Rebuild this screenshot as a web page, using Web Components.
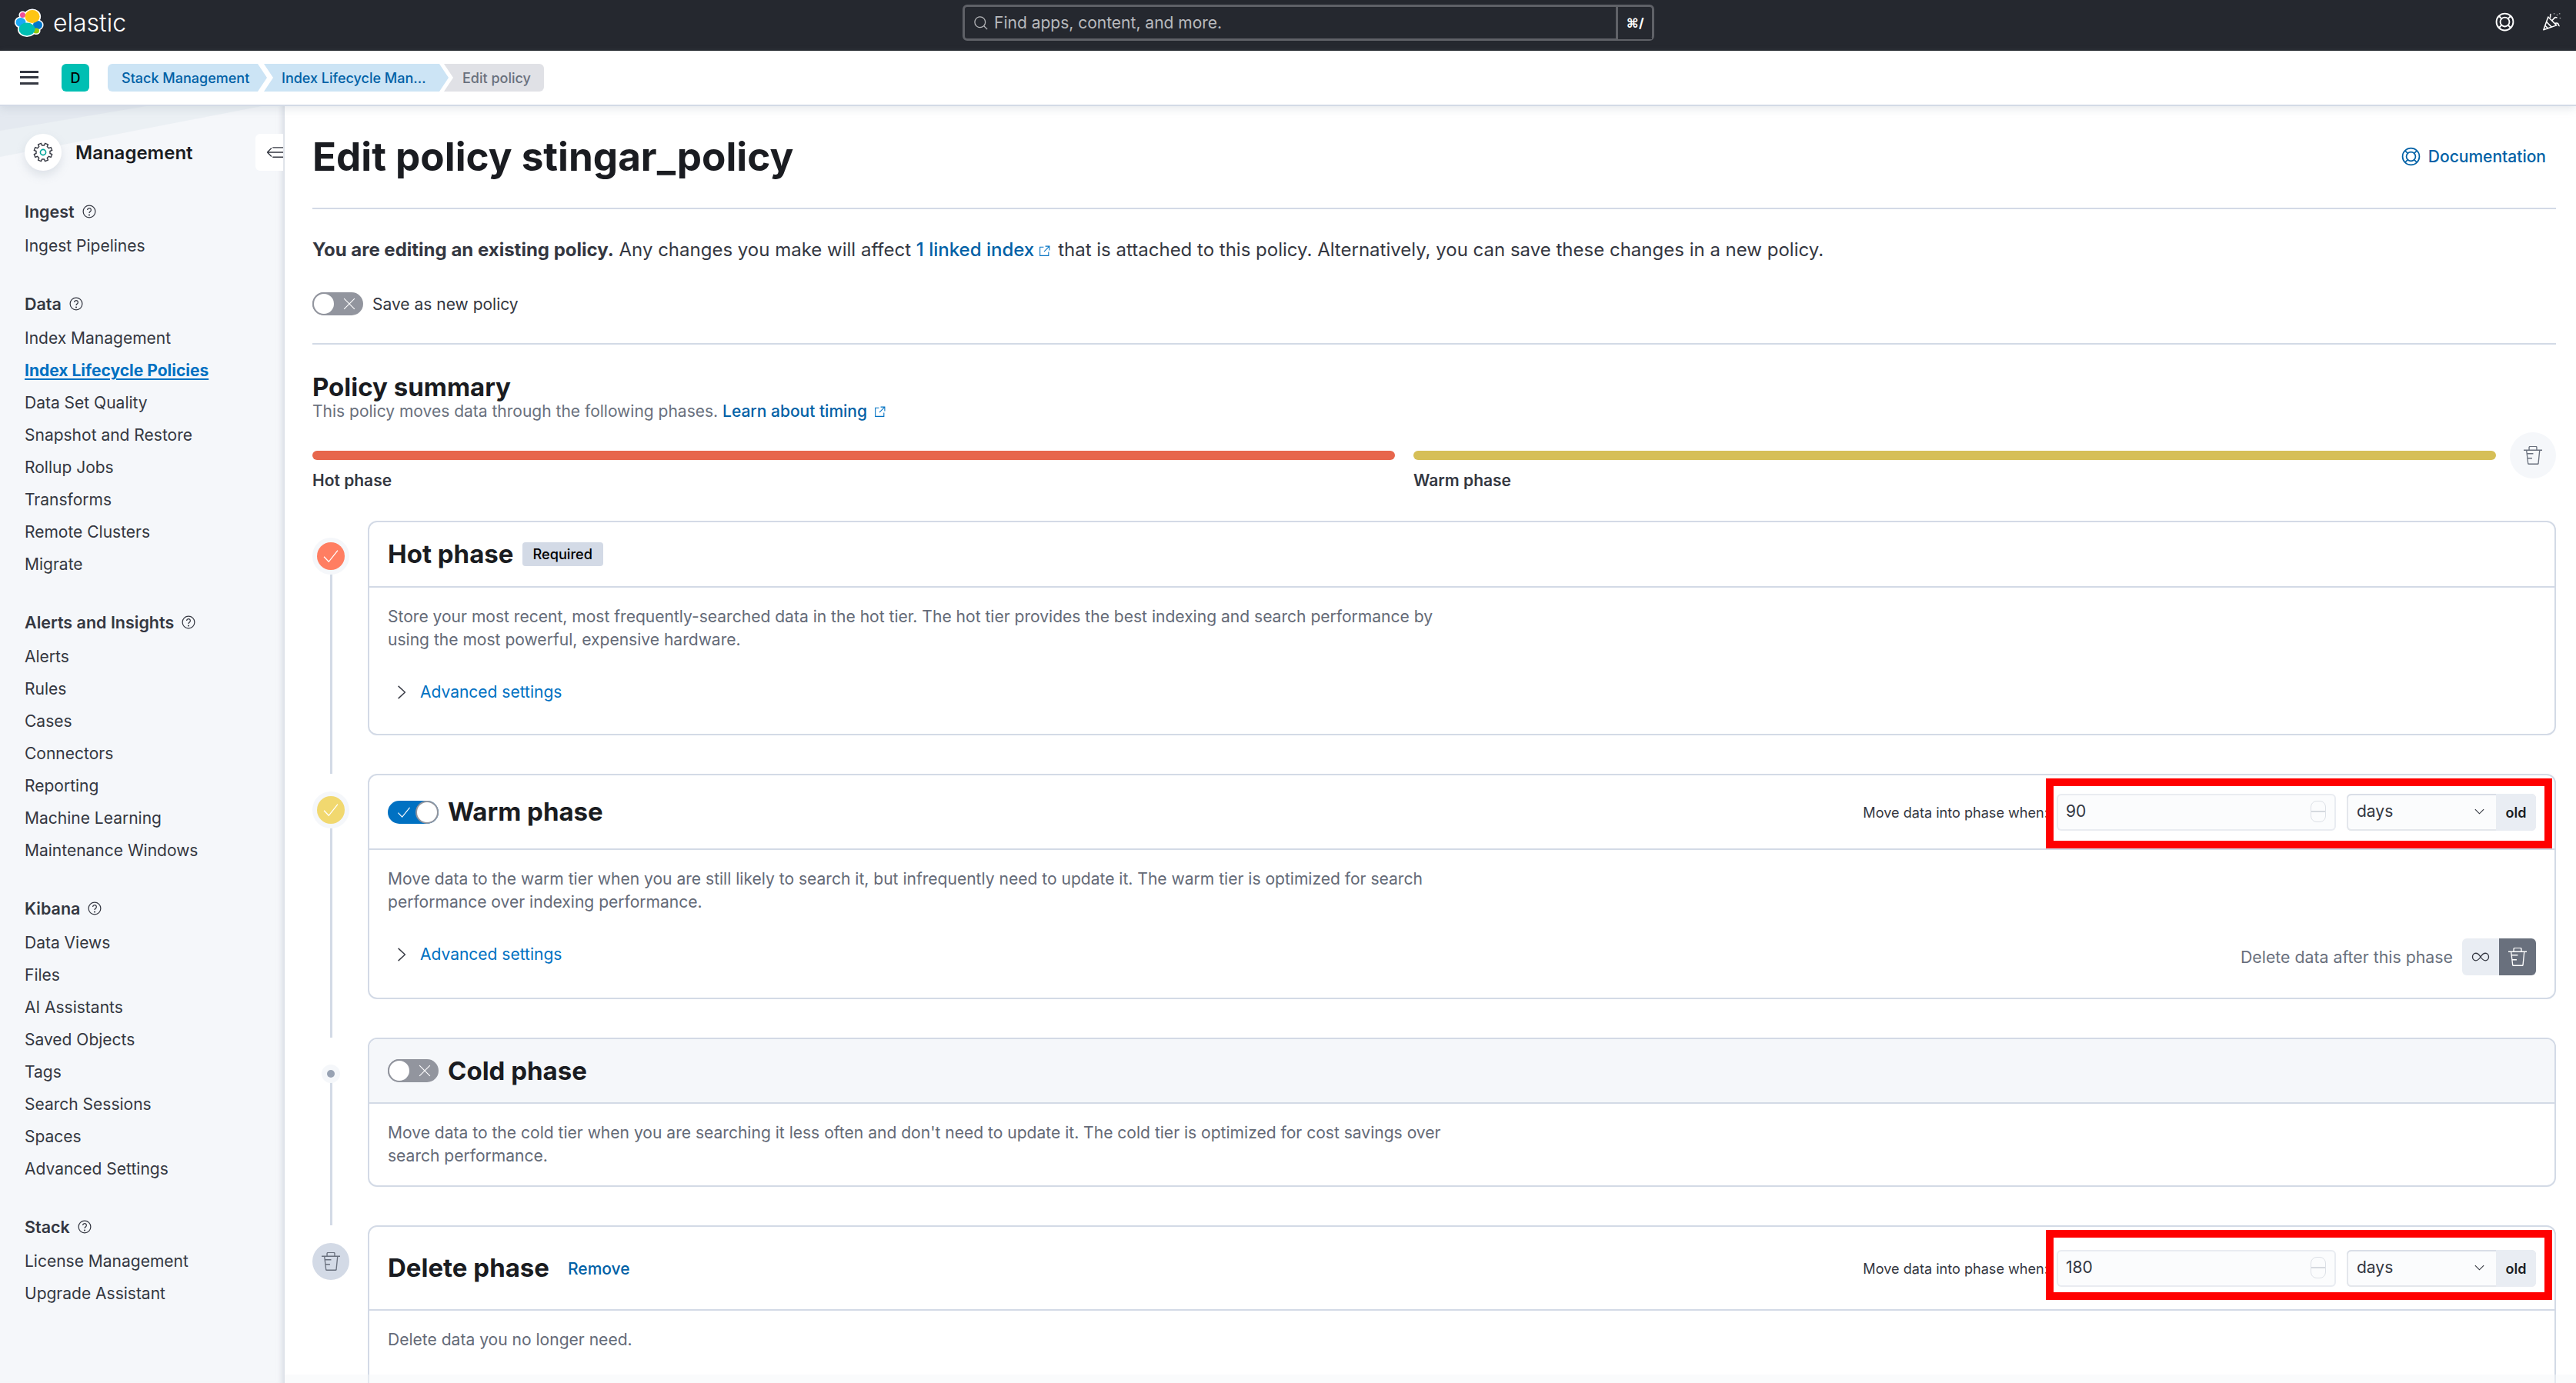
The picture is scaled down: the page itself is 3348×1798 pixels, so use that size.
<!DOCTYPE html>
<html lang="en">
<head>
<meta charset="utf-8">
<title>Edit policy stingar_policy</title>
<style>
  html, body { margin: 0; height: 100%; overflow: hidden; background: #fff; }
  body { font-family: Inter, "Liberation Sans", sans-serif; color: #343741; }
  .shell { display: flex; height: calc(100vh - 138px); }
  .badge { display: inline-block; padding: 0 14px 0 13px; height: 31px; line-height: 31px; border-radius: 4px; background: #d3dae6; font-size: 18.200px; font-weight: 500; color: #000; vertical-align: middle; }
  .remove { margin-left: 12px; font-size: 21px; font-weight: 500; color: #0061a6; vertical-align: middle; }
</style>
</head>
<body>
<app-header></app-header>
<app-breadcrumbs></app-breadcrumbs>
<div class="shell">
  <side-nav>
    <nav-group label="Ingest"><nav-item>Ingest Pipelines</nav-item></nav-group>
    <nav-group label="Data">
      <nav-item>Index Management</nav-item>
      <nav-item active>Index Lifecycle Policies</nav-item>
      <nav-item>Data Set Quality</nav-item>
      <nav-item>Snapshot and Restore</nav-item>
      <nav-item>Rollup Jobs</nav-item>
      <nav-item>Transforms</nav-item>
      <nav-item>Remote Clusters</nav-item>
      <nav-item>Migrate</nav-item>
    </nav-group>
    <nav-group label="Alerts and Insights">
      <nav-item>Alerts</nav-item>
      <nav-item>Rules</nav-item>
      <nav-item>Cases</nav-item>
      <nav-item>Connectors</nav-item>
      <nav-item>Reporting</nav-item>
      <nav-item>Machine Learning</nav-item>
      <nav-item>Maintenance Windows</nav-item>
    </nav-group>
    <nav-group label="Kibana">
      <nav-item>Data Views</nav-item>
      <nav-item>Files</nav-item>
      <nav-item>AI Assistants</nav-item>
      <nav-item>Saved Objects</nav-item>
      <nav-item>Tags</nav-item>
      <nav-item>Search Sessions</nav-item>
      <nav-item>Spaces</nav-item>
      <nav-item>Advanced Settings</nav-item>
    </nav-group>
    <nav-group label="Stack">
      <nav-item>License Management</nav-item>
      <nav-item>Upgrade Assistant</nav-item>
    </nav-group>
  </side-nav>
  <policy-page>
    <phase-row marker="hot" head="85">
      <span slot="title">Hot phase</span>
      <span slot="after-title" class="badge">Required</span>
      Store your most recent, most frequently-searched data in the hot tier. The hot tier provides the best indexing and search performance by using the most powerful, expensive hardware.
      <advanced-row slot="footer"></advanced-row>
    </phase-row>
    <phase-row marker="warm" head="97" marked>
      <eui-switch slot="before-title" checked></eui-switch>
      <span slot="title">Warm phase</span>
      <move-when slot="controls" value="90"></move-when>
      Move data to the warm tier when you are still likely to search it, but infrequently need to update it. The warm tier is optimized for search performance over indexing performance.
      <advanced-row slot="footer" deletable></advanced-row>
    </phase-row>
    <phase-row marker="cold" head="84" shaded>
      <eui-switch slot="before-title"></eui-switch>
      <span slot="title">Cold phase</span>
      Move data to the cold tier when you are searching it less often and don't need to update it. The cold tier is optimized for cost savings over search performance.
    </phase-row>
    <phase-row marker="delete" head="109" marked last>
      <span slot="title">Delete phase</span>
      <span slot="after-title" class="remove">Remove</span>
      <move-when slot="controls" value="180"></move-when>
      Delete data you no longer need.
    </phase-row>
  </policy-page>
</div>

<script>
const ICONS = {
  search: '<circle cx="7" cy="7" r="5.5"/><path d="M11 11l3.5 3.5"/>',
  help: '<circle cx="8" cy="8" r="7"/><path d="M5.900 6.200a2.100 2.100 0 1 1 3.300 1.700c-.8.5-1.200 1-1.200 1.900"/><circle cx="8" cy="12" r=".4"/>',
  lifebuoy: '<circle cx="8" cy="8" r="7"/><circle cx="8" cy="8" r="3.800"/><path d="M3.050 3.050l2.260 2.260M12.950 3.050l-2.260 2.260M3.050 12.950l2.260-2.260M12.950 12.950l-2.260-2.260"/>',
  party: '<path d="M1.200 14.600L5 3.800l7 7-10.800 3.800z" stroke-linejoin="round"/><path d="M3.600 8l4.400 4.400M2.500 11l2.500 2.500"/><path d="M6.500 4.500C7.500 3.500 6 2.500 7.300 1.400M8 7l2.500-2.600c.7-.7 1.200.4 2-.2M10.500 9.500c1-.8 2.500-.6 3 .4.4.8 0 1.400 1 1.500"/><path d="M10 1v.5M12.500 2v.5M14.500 1v.5M15 4.500v.5"/>',
  external: '<path d="M7 3H2.500v10.500H13V9"/><path d="M9 2h5v5M14 2L7.500 8.500"/>',
  check: '<path d="M2.500 8.500l3.800 4L13.500 3.500"/>',
  cross: '<path d="M3 3l10 10M13 3L3 13"/>',
  chevronRight: '<path d="M4.500 1.500l7 6.500-7 6.500"/>',
  chevronDown: '<path d="M2 5.500l6 6 6-6"/>',
  trash: '<path d="M0 3.500h16M4.700 3.500V1.200a1 1 0 0 1 1-1h4.600a1 1 0 0 1 1 1v2.300M2.500 4L3.800 15q.1.500.6.500h7.700q.5 0 .6-.5L13.800 4M2.800 6.500h5.500M3.300 10.500h4"/>',
  infinity: '<path d="M8 8C6.400 5.400 4.900 4.800 3.800 4.800 2.200 4.800 1 6.200 1 8s1.200 3.200 2.800 3.200c1.100 0 2.600-.6 4.200-3.200 1.600-2.600 3.100-3.200 4.200-3.200C13.800 4.800 15 6.200 15 8s-1.200 3.200-2.800 3.200c-1.100 0-2.600-.6-4.200-3.200z"/>',
  collapse: '<path d="M1 8h15M1 8l4-4M1 8l4 4M6 3.500h10M6 12.500h10"/>'
};

class UiIcon extends HTMLElement {
  connectedCallback() {
    const size = this.getAttribute('size') || 24;
    const width = this.getAttribute('stroke') || 1;
    this.attachShadow({ mode: 'open' }).innerHTML = `
      <style>:host { display: inline-flex; flex: none; } svg { display: block; }</style>
      <svg width="${size}" height="${size}" viewBox="0 0 16 16" fill="none" stroke="currentColor" stroke-width="${width}">${ICONS[this.getAttribute('name')]}</svg>`;
  }
}

class AppHeader extends HTMLElement {
  constructor() {
    super();
    const blobs = `
      <ellipse cx="10.500" cy="8.500" rx="3.500" ry="3.500" fill="#f04e98"/>
      <ellipse cx="8" cy="18" rx="6.500" ry="6" fill="#1ba9f5"/>
      <ellipse cx="30" cy="21.500" rx="6" ry="5.500" fill="#0077cc"/>
      <ellipse cx="28" cy="29" rx="4" ry="3.500" fill="#93c90e"/>
      <ellipse cx="23" cy="10.500" rx="9.500" ry="8.500" fill="#fec514"/>
      <ellipse cx="16" cy="27" rx="10.500" ry="8.500" fill="#00bfb3"/>`;
    this.attachShadow({ mode: 'open' }).innerHTML = `
      <style>
        :host { display: flex; align-items: flex-start; height: 66px; background: #25282f; color: #fff; position: relative; }
        .logo { display: flex; align-items: center; gap: 12px; margin: 11px 0 0 19px; width: 1232px; height: 38px; }
        .word { font-size: 32px; font-weight: 300; line-height: 38px; color: #fff; font-family: Inter, sans-serif; }
        .search { display: flex; width: 899px; height: 47px; margin-top: 6px; box-sizing: border-box; border: 3px solid #5f6167; border-radius: 6px; }
        .field { flex: 1; display: flex; align-items: center; gap: 7px; padding-left: 11px; font-size: 21px; color: #b9babd; }
        .key { width: 44px; margin: -1px 0; border: 1px solid #5f6167; border-width: 0 0 0 3px; display: flex; align-items: center; justify-content: center; font-size: 17px; font-weight: 700; box-shadow: 0 -2px 0 #25282f inset; }
        .right { margin-left: auto; display: flex; align-items: center; gap: 36px; margin: 16px 19px 0 auto; }
      </style>
      <div class="logo">
        <svg width="38" height="38" viewBox="0 0 38 38">
          <g stroke="#fff" stroke-width="3.200">${blobs}</g>
          ${blobs}
        </svg>
        <span class="word">elastic</span>
      </div>
      <div class="search">
        <div class="field"><ui-icon name="search" size="20"></ui-icon>Find apps, content, and more.</div>
        <div class="key">⌘/</div>
      </div>
      <div class="right">
        <ui-icon name="lifebuoy" size="25" stroke="1.200"></ui-icon>
        <ui-icon name="party" size="25" stroke="1"></ui-icon>
      </div>`;
  }
}

class AppBreadcrumbs extends HTMLElement {
  constructor() {
    super();
    this.attachShadow({ mode: 'open' }).innerHTML = `
      <style>
        :host { display: flex; align-items: center; height: 72px; box-sizing: border-box; border-bottom: 2px solid #d3dae6; background: #fff; position: relative; z-index: 2; box-shadow: 0 4px 10px rgba(152,162,179,.22); }
        .menu { width: 24px; height: 18px; margin-left: 26px; border-top: 3.500px solid #343741; border-bottom: 3.500px solid #343741; box-sizing: border-box; position: relative; }
        .menu::after { content: ""; position: absolute; left: 0; right: 0; top: 3.750px; height: 3.500px; background: #343741; }
        .space { width: 36px; height: 36px; margin-left: 30px; border-radius: 6px; background: #00bfb3; color: #000; font-size: 18px; font-weight: 500; display: flex; align-items: center; justify-content: center; }
        .crumbs { display: flex; margin-left: 24px; font-size: 18px; font-weight: 500; }
        .crumb { height: 36px; display: flex; align-items: center; white-space: nowrap; }
        .a { width: 207px; padding-left: 18px; box-sizing: border-box; background: #cce4f5; color: #0061a6; border-radius: 6px 0 0 6px; clip-path: polygon(0 0, 195px 0, 100% 50%, 195px 100%, 0 100%); }
        .b { width: 240px; margin-left: -4px; padding-left: 23px; box-sizing: border-box; background: #cce4f5; color: #0061a6; clip-path: polygon(0 0, 228px 0, 100% 50%, 228px 100%, 0 100%, 12px 50%); }
        .c { width: 130px; margin-left: -6px; padding-left: 24px; box-sizing: border-box; background: #e0e1e6; color: #69707d; border-radius: 0 6px 6px 0; clip-path: polygon(0 0, 100% 0, 100% 100%, 0 100%, 12px 50%); }
      </style>
      <div class="menu"></div>
      <div class="space">D</div>
      <div class="crumbs">
        <div class="crumb a">Stack Management</div>
        <div class="crumb b">Index Lifecycle Man…</div>
        <div class="crumb c">Edit policy</div>
      </div>`;
  }
}

class SideNav extends HTMLElement {
  constructor() {
    super();
    // gear outline: eight square teeth, worked out rather than typed as a long path
    const pts = [];
    const at = (r, deg) => {
      const a = deg * Math.PI / 180;
      return (8 + r * Math.cos(a)).toFixed(2) + ',' + (8 + r * Math.sin(a)).toFixed(2);
    };
    for (let k = 0; k < 8; k++) {
      const a = k * 45 + 22.5;
      pts.push(at(5.6, a - 13), at(7.4, a - 10), at(7.4, a + 10), at(5.6, a + 13));
    }
    this.attachShadow({ mode: 'open' }).innerHTML = `
      <style>
        :host { display: block; flex: none; width: 370px; box-sizing: border-box; padding: 36px 0 0 32px; background: #f5f7fa; position: relative; overflow: hidden; box-shadow: inset -10px 0 8px -8px rgba(152,162,179,.4); }
        .shape { position: absolute; left: 0; top: 0; width: 340px; height: 66px; background: #e9edf3; clip-path: polygon(0 0, 100% 0, 0 100%); opacity: .8; }
        .shape.two { width: 190px; height: 32px; background: #dfe4ec; opacity: .6; }
        .head { display: flex; align-items: center; height: 48px; position: relative; margin-bottom: 38px; }
        .gear { width: 48px; height: 48px; border-radius: 50%; background: #fff; display: flex; align-items: center; justify-content: center; box-shadow: 0 6px 12px rgba(152,162,179,.25); }
        .name { margin-left: 18px; font-size: 24px; font-weight: 600; color: #1a1c21; }
        .collapse { position: absolute; left: 300px; top: 0; width: 36px; height: 48px; background: #fff; border-radius: 6px 0 0 6px; display: flex; align-items: center; justify-content: flex-end; color: #343741; overflow: hidden; }
      </style>
      <div class="shape"></div><div class="shape two"></div>
      <div class="head">
        <div class="gear">
          <svg width="26" height="26" viewBox="0 0 16 16" fill="none">
            <polygon points="${pts.join(' ')}" stroke="#343741" stroke-width=".85" stroke-linejoin="round"/>
            <circle cx="8" cy="8" r="2.200" stroke="#00a69b" stroke-width="1"/>
          </svg>
        </div>
        <div class="name">Management</div>
        <div class="collapse"><ui-icon name="collapse" size="22"></ui-icon></div>
      </div>
      <slot></slot>`;
  }
}

class NavGroup extends HTMLElement {
  constructor() {
    super();
    this.attachShadow({ mode: 'open' }).innerHTML = `
      <style>
        :host { display: block; margin-bottom: 39px; }
        .label { display: flex; align-items: center; gap: 10px; height: 30px; margin-bottom: 9px; font-size: 21.500px; font-weight: 600; color: #343741; }
      </style>
      <div class="label"><span id="t"></span><ui-icon name="help" size="18" stroke="1.100"></ui-icon></div>
      <slot></slot>`;
    this.shadowRoot.getElementById('t').textContent = this.getAttribute('label');
  }
}

class NavItem extends HTMLElement {
  constructor() {
    super();
    this.attachShadow({ mode: 'open' }).innerHTML = `
      <style>
        :host { display: block; height: 42px; line-height: 42px; font-size: 21px; color: #343741; white-space: nowrap; }
        :host([active]) { color: #0071c2; font-weight: 700; }
        :host([active]) span { text-decoration: underline; text-decoration-thickness: 2px; text-underline-offset: 3px; }
      </style>
      <span><slot></slot></span>`;
  }
}

class EuiSwitch extends HTMLElement {
  constructor() {
    super();
    this.attachShadow({ mode: 'open' }).innerHTML = `
      <style>
        :host { display: flex; position: relative; flex: none; width: 66px; height: 30px; border-radius: 15px; background: #92959e; color: #fff; align-items: center; }
        :host([checked]) { background: #0071c2; }
        .thumb { position: absolute; left: 0; top: 0; width: 30px; height: 30px; box-sizing: border-box; border-radius: 50%; background: #fff; border: 2px solid #92959e; }
        :host([checked]) .thumb { left: auto; right: 0; }
        ui-icon { position: absolute; left: 37px; top: 4px; }
        :host([checked]) ui-icon { left: 10px; }
      </style>
      <ui-icon name="${this.hasAttribute('checked') ? 'check' : 'cross'}" size="22" stroke=".8"></ui-icon>
      <div class="thumb"></div>`;
  }
}

class MoveWhen extends HTMLElement {
  constructor() {
    super();
    this.attachShadow({ mode: 'open' }).innerHTML = `
      <style>
        :host { display: flex; align-items: center; }
        .label { font-size: 18.100px; color: #343741; margin-right: 11px; white-space: nowrap; }
        .input { width: 363px; height: 48px; box-sizing: border-box; display: flex; align-items: center; padding: 0 13px 2px 12px; border-radius: 6px; background: #fbfcfd; box-shadow: inset 0 0 0 2px #e9ecf1; font-size: 21px; color: #343741; }
        .spin { margin-left: auto; width: 20px; height: 28px; box-sizing: border-box; border: 1px solid #dde1e7; border-radius: 8px; position: relative; background: #fbfcfd; }
        .spin::after { content: ""; position: absolute; left: 0; right: 0; top: 12px; height: 2px; background: #d5d9df; }
        .select { margin-left: 14px; width: 246px; height: 48px; box-sizing: border-box; display: flex; border-radius: 6px; overflow: hidden; background: #fbfcfd; box-shadow: inset 0 2px 0 #d9dee7, inset 0 -2px 0 #e4e7ec, inset 2px 0 0 #e4e7ec; font-size: 21px; color: #343741; }
        .unit { flex: 1; display: flex; align-items: center; justify-content: space-between; padding: 0 14px 2px 13px; }
        .old { width: 52px; display: flex; align-items: center; justify-content: center; background: #e9edf3; font-size: 18px; font-weight: 600; color: #1a1c21; padding-top: 1px; box-sizing: border-box; }
      </style>
      <div class="label">Move data into phase when:</div>
      <div class="input"><span>${this.getAttribute('value')}</span><div class="spin"></div></div>
      <div class="select">
        <div class="unit"><span>days</span><ui-icon name="chevronDown" size="15" stroke="1.200"></ui-icon></div>
        <div class="old">old</div>
      </div>`;
  }
}

class AdvancedRow extends HTMLElement {
  constructor() {
    super();
    this.attachShadow({ mode: 'open' }).innerHTML = `
      <style>
        :host { display: flex; justify-content: space-between; margin: 29px 0 7px; font-size: 21px; }
        .adv { display: flex; align-items: center; height: 48px; color: #0071c2; }
        .adv ui-icon { margin: 0 14px 0 8px; color: #343741; }
        .del { display: flex; align-items: center; height: 48px; margin: 3px 0 -1px; color: #69707d; font-size: 21.300px; }
        .grp { display: flex; margin-left: 12px; border-radius: 6px; overflow: hidden; }
        .grp div { width: 48px; height: 48px; display: flex; align-items: center; justify-content: center; }
        .inf { background: #e9edf3; color: #343741; }
        .bin { background: #69707d; color: #fff; }
      </style>
      <div class="adv"><ui-icon name="chevronRight" size="20" stroke="1.100"></ui-icon>Advanced settings</div>
      ${this.hasAttribute('deletable') ? `
      <div class="del">Delete data after this phase
        <div class="grp">
          <div class="inf"><ui-icon name="infinity" size="24" stroke=".9"></ui-icon></div>
          <div class="bin"><ui-icon name="trash" size="24" stroke=".9"></ui-icon></div>
        </div>
      </div>` : ''}`;
  }
}

class PhaseRow extends HTMLElement {
  constructor() {
    super();
    const marker = this.getAttribute('marker');
    const head = this.getAttribute('head');
    const dot = { hot: 'check', warm: 'check' }[marker];
    this.attachShadow({ mode: 'open' }).innerHTML = `
      <style>
        :host { display: flex; position: relative; margin-bottom: 50px; }
        :host([last]) { margin-bottom: 0; }
        .rail { flex: none; width: 72px; position: relative; }
        .rail::before { content: ""; position: absolute; left: 23px; width: 3px; top: 46px; bottom: -50px; background: #d3dae6; }
        :host([last]) .rail::before { display: none; }
        .halo { position: absolute; left: 0; top: 23px; width: 48px; height: 48px; border-radius: 50%; background: #f5f7fa; display: flex; align-items: center; justify-content: center; color: #fff; }
        .halo.hot { top: 22px; }
        .disc { width: 36px; height: 36px; border-radius: 50%; display: flex; align-items: center; justify-content: center; }
        .hot .disc { background: #ff7e62; }
        .warm .disc { background: #f1d86f; }
        .halo.cold { left: 12px; top: 35px; width: 24px; height: 24px; }
        .cold .disc { width: 10px; height: 10px; background: #98a2b3; }
        .delete { background: #d3dae6; color: #69707d; }
        .card { flex: 1; min-width: 0; box-sizing: border-box; border: 2px solid #d3dae6; border-radius: 12px; background: #fff; }
        :host([last]) .card { min-height: 300px; }
        .head { height: ${head}px; box-sizing: border-box; border-bottom: 2px solid #d3dae6; padding: 0 24px; display: flex; align-items: center; position: relative; border-radius: 10px 10px 0 0; }
        :host([shaded]) .head { background: #f5f7fa; }
        .title { font-size: 33px; font-weight: 700; color: #1a1c21; line-height: 40px; margin-top: -1px; }
        ::slotted([slot="before-title"]) { margin-right: 12px; }
        .after { margin-left: 12px; }
        ::slotted(.remove) { margin-left: 12px; }
        .ctl { margin-left: auto; }
        .mark { position: absolute; top: 4px; right: 3px; width: 658px; height: 91px; box-sizing: border-box; border: 10px solid #f00; }
        .body { padding: 23px 24px; font-size: 21.060px; line-height: 30px; color: #646a77; }
        .text { max-width: 1400px; }
      </style>
      <div class="rail">
        <div class="halo ${marker}">${
          marker === 'delete' ? '<ui-icon name="trash" size="24" stroke=".9"></ui-icon>'
          : `<div class="disc">${dot ? '<ui-icon name="check" size="26" stroke=".8"></ui-icon>' : ''}</div>`
        }</div>
      </div>
      <div class="card">
        <div class="head">
          <slot name="before-title"></slot>
          <div class="title"><slot name="title"></slot></div>
          <div class="after"><slot name="after-title"></slot></div>
          <div class="ctl"><slot name="controls"></slot></div>
          ${this.hasAttribute('marked') ? '<div class="mark"></div>' : ''}
        </div>
        <div class="body">
          <div class="text"><slot></slot></div>
          <slot name="footer"></slot>
        </div>
      </div>`;
  }
}

class PolicyPage extends HTMLElement {
  constructor() {
    super();
    this.attachShadow({ mode: 'open' }).innerHTML = `
      <style>
        :host { display: block; flex: 1; min-width: 0; box-sizing: border-box; padding: 33px 26px 0 36px; background: #fff; font-size: 21px; color: #343741; position: relative; }
        :host::after { content: ""; position: absolute; left: 0; right: 0; top: 1649px; height: 11px; background: rgba(245,247,250,.5); }
        a { color: #0061a6; text-decoration: none; font-weight: 500; }
        .top { display: flex; align-items: center; justify-content: space-between; height: 64px; }
        h1 { margin: 0; font-size: 51.200px; line-height: 64px; font-weight: 700; color: #1a1c21; }
        .doc { display: flex; align-items: center; gap: 10px; margin-right: 13px; font-size: 21px; font-weight: 500; color: #0061a6; }
        hr { border: 0; height: 2px; background: #d3dae6; margin: 0; }
        .intro { margin-top: 38px; font-size: 24px; line-height: 30px; white-space: nowrap; }
        .intro b { font-weight: 700; }
        .ext { vertical-align: -2px; margin-left: 5px; margin-right: 9px; color: #0071c2; display: inline-flex; }
        .save { display: flex; align-items: center; gap: 12px; margin-top: 40px; }
        h2 { margin: 35px 0 0; font-size: 33px; line-height: 40px; font-weight: 700; color: #1a1c21; }
        .sub { font-size: 21px; line-height: 24px; color: #69707d; }
        .sub a { color: #0061a6; }
        .sub .ext { margin-left: 8px; }
        .bars { display: grid; grid-template-columns: 1fr 1fr 54px; column-gap: 24px; margin-top: 39px; margin-bottom: 37px; }
        .bar { height: 12px; border-radius: 6px; }
        .lbl { margin-top: 12px; font-size: 21px; font-weight: 600; line-height: 30px; color: #343741; }
        .bin { grid-column: 3; grid-row: 1 / 3; margin: -24px 0 0 -6px; width: 60px; height: 60px; border-radius: 50%; background: #f5f7fa; color: #69707d; display: flex; align-items: center; justify-content: center; }
      </style>
      <div class="top">
        <h1>Edit policy stingar_policy</h1>
        <div class="doc"><ui-icon name="lifebuoy" size="25" stroke="1.100"></ui-icon>Documentation</div>
      </div>
      <hr style="margin-top:35px">
      <div class="intro"><b>You are editing an existing policy.</b> Any changes you make will affect <a>1 linked index</a><span class="ext"><ui-icon name="external" size="17"></ui-icon></span>that is attached to this policy. Alternatively, you can save these changes in a new policy.</div>
      <div class="save"><eui-switch></eui-switch><span>Save as new policy</span></div>
      <hr style="margin-top:36px">
      <h2>Policy summary</h2>
      <div class="sub">This policy moves data through the following phases. <a>Learn about timing</a><span class="ext"><ui-icon name="external" size="17"></ui-icon></span></div>
      <div class="bars">
        <div class="bar" style="background:#e7664c"></div>
        <div class="bar" style="background:#d6bf57"></div>
        <div class="bin"><ui-icon name="trash" size="24" stroke=".9"></ui-icon></div>
        <div class="lbl">Hot phase</div>
        <div class="lbl">Warm phase</div>
      </div>
      <slot></slot>`;
  }
}

customElements.define('ui-icon', UiIcon);
customElements.define('app-header', AppHeader);
customElements.define('app-breadcrumbs', AppBreadcrumbs);
customElements.define('side-nav', SideNav);
customElements.define('nav-group', NavGroup);
customElements.define('nav-item', NavItem);
customElements.define('eui-switch', EuiSwitch);
customElements.define('move-when', MoveWhen);
customElements.define('advanced-row', AdvancedRow);
customElements.define('phase-row', PhaseRow);
customElements.define('policy-page', PolicyPage);
</script>
</body>
</html>
